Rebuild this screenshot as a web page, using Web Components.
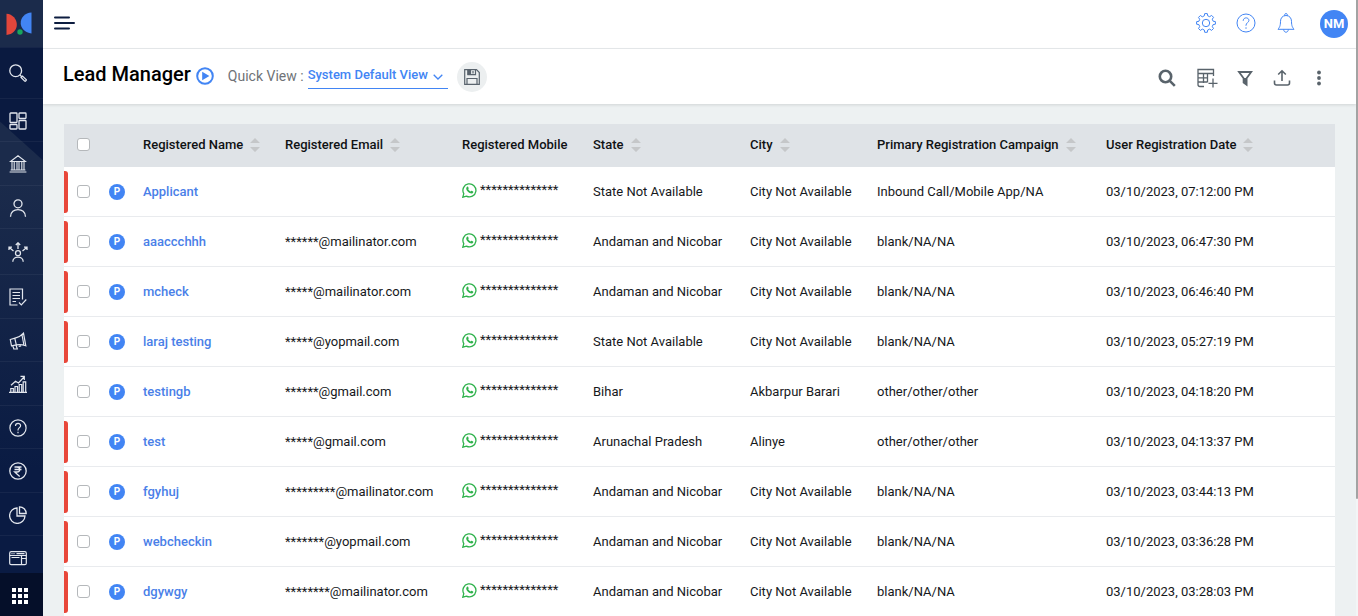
<!DOCTYPE html>
<html lang="en">
<head>
<meta charset="utf-8">
<meta name="viewport" content="width=device-width, initial-scale=1">
<title>Lead Manager</title>
<style>
  body {
    margin: 0; background: #edf1f2; color: #16181b;
    font: 400 13px/20px Roboto, "Liberation Sans", sans-serif;
  }
</style>
</head>
<body>
<app-shell>
  <side-bar slot="side"></side-bar>
  <top-bar slot="top" initials="NM"></top-bar>
  <page-header slot="header" heading="Lead Manager">
    <view-picker></view-picker>
    <page-tools slot="tools"></page-tools>
  </page-header>
  <lead-table></lead-table>
</app-shell>

<script>
(() => {
  // name: [viewBox width, viewBox height, stroke width, markup]
  const ICONS = {
    logo: [26, 24, 0, `<path fill="#e2463b" d="M.5 1.700C6.500 2 11 7 10.800 13 10.600 18.300 6.500 22.400.5 23z"/><path fill="#4285f4" d="M25.500.5v20.900C19 20.500 15 16.500 14.700 11.500 14.500 5.600 19 .8 25.500.5z"/><circle cx="14" cy="20" r="2.700" fill="#18a55c"/>`],
    menu: [22, 14, 2, `<path d="M2 1.500h14M2 7h19M2 12.500h14" stroke-linecap="round"/>`],
    search: [18, 18, 1.3, `<circle cx="6.700" cy="6.700" r="5.900"/><path d="m11 11 1.500 1.500M12.100 13.500l1.400-1.400 3.700 3.500c.5.6-.9 2-1.500 1.500z"/>`],
    dashboard: [18, 18, 1.3, `<rect x="1" y="1" width="7" height="9.500" rx=".7"/><rect x="1" y="12.500" width="7" height="4.500" rx=".7"/><rect x="10" y="1" width="7" height="5.500" rx=".7"/><rect x="10" y="8.500" width="7" height="8.500" rx=".7"/>`],
    bank: [18, 18, 1.1, `<path d="M1.500 6.500 9 .8l7.500 5.700zM.6 17h16.800M1.600 15h14.800M3 6.500V15M5.200 6.500V15M8 6.500V15M10 6.500V15M12.800 6.500V15M15 6.500V15"/>`],
    user: [18, 18, 1.3, `<circle cx="9" cy="4.800" r="4"/><path d="M1.500 17.800c0-9.700 15-9.700 15 0"/>`],
    team: [20, 20, 1.3, `<circle cx="10" cy="11.200" r="2.500"/><path d="M4.800 19.800c0-6.200 10.400-6.200 10.400 0M10 7V1M7.800 3 10 .8 12.200 3M5.500 9 1 5.300M1 8V5.200h3M14.500 9 19 5.300M19 8V5.200h-3"/>`],
    form: [18, 18, 1.2, `<path d="M8.500 17H1V1h12.500v10.500M3.500 4.500H11M3.500 7.500H11M3.500 10.500H11M3.500 13.500H7M10 14.500l2.300 2.300 5-5.300"/>`],
    megaphone: [18, 18, 1.2, `<path d="M1.300 7.500 6 6.200C9.500 5.300 12.300 3.800 14.500 1.200l2.300 12.600c-3.200-1.300-6-1.600-9.300-1l-5 1zM5.800 6.300l1.500 6.600M3.800 13.500l1 3.500h3.500l-1.300-4M13 3l1.900 10M9.700 14.500l1.800-.5-.6-1.300"/>`],
    growth: [18, 18, 1.2, `<path d="M0 17.300h18M1.800 17v-3.500h2.500V17M6 17v-5.500h2.500V17M10.200 17V9.500h2.500V17M14.200 17V6.800h2.500V17M2 10.200l4.500-4 3 1.800 5.500-6M11.500 1.400H15.300V5"/>`],
    help: [20, 20, 1.3, `<circle cx="10" cy="10" r="9"/><path d="M7.200 7.800c.1-3.900 5.700-3.800 5.700-.3 0 2-2.900 2.300-2.900 4.800v.5M10 14.300v1.500"/>`],
    rupee: [18, 18, 1.3, `<circle cx="9" cy="9" r="8.200"/><path d="M5.500 5h7M5.500 7.500h7M5.500 5H8c3.600 0 3.600 5 0 5H5.700l5 4.500"/>`],
    pie: [18, 18, 1.3, `<path d="M8 2a7.700 7.700 0 1 0 8 8H8zM10.500.8v6.700h6.700A6.800 6.800 0 0 0 10.500.8z"/>`],
    browser: [18, 18, 1.2, `<rect x=".7" y="2.700" width="16.600" height="13" rx="1.500"/><path d="M.7 6.500h16.600M2.500 4.600h1M4.500 4.600h1M7.500 4.600h8M12.500 6.500v9M12.500 9.500h4.800M2.500 8.500h8"/>`],
    apps: [18, 18, 0, `<path fill="currentColor" d="M1 1h4v4H1zM7 1h4v4H7zM13 1h4v4h-4zM1 7h4v4H1zM7 7h4v4H7zM13 7h4v4h-4zM1 13h4v4H1zM7 13h4v4H7zM13 13h4v4h-4z"/>`],
    gear: [20, 20, 1, `<circle cx="10" cy="10" r="3.700"/><path d="M8.300 2.800 8.700.6h2.600l.4 2.200 2 .9 1.900-1.300 1.900 1.900-1.200 1.900.8 2 2.300.4v2.600l-2.300.4-.8 2 1.200 1.900-1.900 1.900-1.900-1.300-2 .9-.4 2.300H8.700l-.4-2.300-2-.9-1.900 1.300-1.900-1.900 1.200-1.900-.8-2-2.300-.4V8.700l2.300-.4.8-2-1.200-1.900 1.900-1.900 1.900 1.300z" stroke-linejoin="round"/>`],
    bell: [20, 20, 1, `<path d="M10 2.500c-3.600 0-5.500 2.800-5.500 5.800 0 5-1.200 6.200-2.500 8h16c-1.300-1.800-2.500-3-2.500-8 0-3-1.900-5.800-5.500-5.800zM8.700 2.700V1.500c0-1.200 2.600-1.200 2.600 0v1.200M7.700 16.500c0 3.600 4.600 3.600 4.600 0"/>`],
    play: [18, 18, 2, `<circle cx="9" cy="9" r="7.800"/><path fill="currentColor" stroke="none" d="M6.200 4.700 13.400 9l-7.200 4.300z"/>`],
    chevron: [10, 6, 1.3, `<path d="m.7.7 4.300 4.300L9.300.7"/>`],
    save: [16, 16, 1.2, `<path d="M.7.7h11.800l2.800 2.800v11.800H.7zM4 .7v5h7.500v-5M9 2v2.500M3 15.300V9.500h10v5.800"/><path fill="currentColor" d="M4 1h2.500v4.500H4z"/>`],
    find: [20, 20, 2.6, `<circle cx="8.500" cy="8.500" r="5.700"/><path d="m12.800 12.800 5 5"/>`],
    columns: [24, 20, 1.3, `<path d="M10 18.500H6a2 2 0 0 1-2-2V1.500h15.500V8M4 5.500h15.500M4 9.800h9M4 14h9M9.500 5.500v9.500M13.500 5.500v9M19 10.500v9M14.500 15.300h9"/>`],
    filter: [20, 20, 1.8, `<path d="M4 4h12.200l-4.600 6.200v6.600l-3-2.200v-4.400z"/><path fill="currentColor" d="M9 10h2.500v6L9 14.500z" stroke="none"/>`],
    upload: [20, 20, 1.6, `<path d="M2.500 12.500v2.500q0 2 2 2h11q2 0 2-2v-2.500M10 13V3M6.200 6.500 10 2.800l3.800 3.700"/>`],
    more: [20, 20, 0, `<g fill="currentColor"><circle cx="10" cy="4.500" r="1.900"/><circle cx="10" cy="10" r="1.900"/><circle cx="10" cy="15.500" r="1.900"/></g>`],
    whatsapp: [15, 15, 1.3, `<path d="m.8 14.200 1-3.600A6.500 6.500 0 1 1 4.400 13.100z"/><path fill="currentColor" stroke="none" d="M5.100 3.700c.7-.4 1-.1 1.200.5l.4 1c.1.400-.5.800-.5 1.100.5 1 1.300 1.700 2.400 2.200.4.100.8-.8 1.100-.7l1.400.7c.6.300-.1 1.700-.9 1.900-2.400.6-6-2.500-6-4.900 0-.8.4-1.500.9-1.800z"/>`],
    sort: [10, 14, 0, `<path fill="currentColor" d="M5 0l5 5H0zM0 9h10l-5 5z"/>`]
  };

  class AppIcon extends HTMLElement {
    connectedCallback() {
      if (this.shadowRoot) return;
      const [w, h, stroke, markup] = ICONS[this.getAttribute("name")];
      const width = this.getAttribute("size") || w;
      this.attachShadow({ mode: "open" }).innerHTML = `
        <style>:host { display:inline-flex; flex:none; } svg { display:block; }</style>
        <svg width="${width}" height="${Math.round(width * h / w)}" viewBox="0 0 ${w} ${h}" fill="none"
          stroke="${stroke ? "currentColor" : "none"}" stroke-width="${this.getAttribute("weight") || stroke}" aria-hidden="true">${markup}</svg>`;
    }
  }

  // Base for elements whose shadow root is drawn once from a string.
  class View extends HTMLElement {
    connectedCallback() {
      if (this.shadowRoot) return;
      this.attachShadow({ mode: "open" }).innerHTML = `
        <style>
          * { box-sizing:border-box; }
          button, select, input { font:inherit; color:inherit; margin:0; }
          button { display:flex; align-items:center; justify-content:center; padding:0; border:0; background:none; cursor:pointer; }
        </style>${this.view()}`;
    }
  }

  class AppShell extends View {
    view() {
      return `
        <style>
          :host { display:grid; grid-template-columns:auto 1fr auto; height:100vh; overflow:hidden; }
          .main { min-width:0; min-height:0; overflow:hidden; }
          .content { padding:20px 21px; }
          .rail { width:2px; background:#f3f5f6; }
          .thumb { height:81%; background:#a3a3a3; border-radius:0 0 2px 2px; }
        </style>
        <slot name="side"></slot>
        <div class="main">
          <slot name="top"></slot>
          <slot name="header"></slot>
          <main class="content"><slot></slot></main>
        </div>
        <div class="rail"><div class="thumb"></div></div>`;
    }
  }

  class SideBar extends View {
    view() {
      const items = [
        ["dashboard", "Dashboard", 21], ["bank", "Institute", 22], ["user", "Leads", 21], ["team", "Team", 24],
        ["form", "Applications", 22], ["megaphone", "Campaigns", 21], ["growth", "Analytics", 22],
        ["help", "Queries", 21], ["rupee", "Payments", 22], ["pie", "Reports", 21], ["browser", "Pages", 22]
      ];
      return `
        <style>
          :host {
            display:flex; flex-direction:column; width:43px; height:100vh; overflow:hidden; color:#e3e7ee;
            background:linear-gradient(222deg,#0a1a40 0,#0a1a40 83px,transparent 84px) 0 48px no-repeat,
              linear-gradient(#1b2b4b 0,#1b2b4b 180px,#0a1b43 470px);
          }
          a { display:flex; justify-content:center; align-items:center; color:inherit; }
          .logo { height:47px; padding-right:6px; flex:none; }
          nav { flex:1; min-height:0; overflow:hidden; }
          .search, nav a { width:100%; padding-right:7px; border-bottom:1px solid #ffffff0d; }
          .search { height:52px; flex:none; background:#0a1a40; border-top:1px solid #ffffff0d; }
          nav a { box-sizing:content-box; width:36px; padding-top:11px; padding-bottom:10px; }
          .apps { height:43px; flex:none; width:100%; color:#fff; background:#050f29; padding:3px 3px 0 0; }
        </style>
        <a class="logo" href="#" aria-label="Home"><app-icon name="logo"></app-icon></a>
        <button class="search" aria-label="Search"><app-icon name="search"></app-icon></button>
        <nav>${items.map(([icon, label, height]) =>
          `<a href="#" aria-label="${label}" style="height:${height}px"><app-icon name="${icon}" size="${icon === "team" ? 20 : 18}"></app-icon></a>`).join("")}</nav>
        <button class="apps" aria-label="All apps"><app-icon name="apps"></app-icon></button>`;
    }
  }

  class TopBar extends View {
    view() {
      return `
        <style>
          :host { display:flex; align-items:center; height:48px; padding:0 8px 0 10px; background:#fff; border-bottom:1px solid #e8ebed; box-sizing:content-box; }
          .menu { color:#0d1d40; margin-right:auto; }
          .menu, .actions { padding-bottom:2px; }
          .actions { display:flex; gap:20px; margin-right:24px; color:#4285f4; }
          .avatar { width:28px; height:28px; border-radius:50%; background:#4285f4; color:#fff; font-weight:700; }
        </style>
        <button class="menu" aria-label="Menu"><app-icon name="menu"></app-icon></button>
        <div class="actions">
          <button aria-label="Settings"><app-icon name="gear"></app-icon></button>
          <button aria-label="Help"><app-icon name="help" weight="1"></app-icon></button>
          <button aria-label="Notifications"><app-icon name="bell"></app-icon></button>
        </div>
        <button class="avatar">${this.getAttribute("initials")}</button>`;
    }
  }

  class PageHeader extends View {
    view() {
      return `
        <style>
          :host { display:flex; align-items:center; height:55px; padding:0 27px 0 20px; background:#fff; box-shadow:0 1px 3px #0000001f; }
          h1 { margin:0 5px 6px 0; font-size:20px; line-height:24px; font-weight:500; color:#000; }
          .play { color:#4285f4; margin:0 14px 2px 0; }
          .tools { margin-left:auto; }
        </style>
        <h1>${this.getAttribute("heading")}</h1>
        <button class="play" aria-label="Watch guide"><app-icon name="play"></app-icon></button>
        <slot></slot>
        <div class="tools"><slot name="tools"></slot></div>`;
    }
  }

  class ViewPicker extends View {
    view() {
      return `
        <style>
          :host { display:flex; align-items:center; }
          label { margin:0 4px 2px 0; font-size:14px; color:#6f7377; }
          .field { display:grid; grid-template-columns:1fr 10px; width:140px; height:24px; border-bottom:1px solid #4285f4; color:#4285f4; }
          select {
            grid-area:1/1/2/3; width:100%; height:20px; padding:0; border:0; outline:0;
            appearance:none; background:none; font-weight:500;
          }
          app-icon { pointer-events:none; }
          .field app-icon { grid-area:1/2; margin:9px 5px 0 0; justify-self:end; }
          .save { width:30px; height:30px; margin-left:9px; border-radius:50%; background:#eceff0; color:#59636d; }
        </style>
        <label for="view">Quick View :</label>
        <div class="field">
          <select id="view"><option>System Default View</option></select>
          <app-icon name="chevron"></app-icon>
        </div>
        <button class="save" aria-label="Save view"><app-icon name="save"></app-icon></button>`;
    }
  }

  class PageTools extends View {
    view() {
      const tools = { find: "Search", columns: "Add column", filter: "Filter", upload: "Export", more: "More" };
      return `
        <style>:host { display:flex; gap:17px; padding-top:2px; color:#59636b; }</style>
        ${Object.entries(tools).map(([icon, label]) =>
          `<button aria-label="${label}"><app-icon name="${icon}"></app-icon></button>`).join("")}`;
    }
  }

  const NO_CITY = "City Not Available";
  const COLUMNS = [
    ["Registered Name", 142, true], ["Registered Email", 177, true], ["Registered Mobile", 131, false],
    ["State", 157, true], ["City", 127, true], ["Primary Registration Campaign", 229, true], ["User Registration Date", 229, true]
  ];
  const LEADS = [
    ["Applicant", "", "State Not Available", NO_CITY, "Inbound Call/Mobile App/NA", "07:12:00", true],
    ["aaaccchhh", "******@mailinator.com", "Andaman and Nicobar", NO_CITY, "blank/NA/NA", "06:47:30", true],
    ["mcheck", "*****@mailinator.com", "Andaman and Nicobar", NO_CITY, "blank/NA/NA", "06:46:40", true],
    ["laraj testing", "*****@yopmail.com", "State Not Available", NO_CITY, "blank/NA/NA", "05:27:19", true],
    ["testingb", "******@gmail.com", "Bihar", "Akbarpur Barari", "other/other/other", "04:18:20", false],
    ["test", "*****@gmail.com", "Arunachal Pradesh", "Alinye", "other/other/other", "04:13:37", true],
    ["fgyhuj", "*********@mailinator.com", "Andaman and Nicobar", NO_CITY, "blank/NA/NA", "03:44:13", true],
    ["webcheckin", "*******@yopmail.com", "Andaman and Nicobar", NO_CITY, "blank/NA/NA", "03:36:28", true],
    ["dgywgy", "********@mailinator.com", "Andaman and Nicobar", NO_CITY, "blank/NA/NA", "03:28:03", true]
  ];

  class LeadTable extends View {
    view() {
      return `
        <style>
          :host { display:block; background:#fff; }
          table { width:100%; table-layout:fixed; border-collapse:separate; border-spacing:0; }
          th, td { padding:0; text-align:left; white-space:nowrap; }
          th { height:43px; padding-bottom:2px; background:#dfe3e7; font-weight:500; color:#101214; }
          td { height:50px; border-bottom:1px solid #e9ebee; }
          .head, .mobile { display:flex; align-items:center; }
          .head { gap:7px; }
          .head button { color:#c5c7c9; }
          .mobile { gap:3px; margin-bottom:3px; }
          .mobile app-icon { color:#2fb24c; }
          .pick { display:flex; align-items:center; padding-left:13px; }
          td .pick { height:42px; }
          .hot .pick { gap:9px; padding-left:0; }
          .hot .pick::before { content:""; width:4px; height:42px; background:#e8473a; border-radius:0 3px 3px 0; }
          input { appearance:none; width:13px; height:13px; border:1px solid #b5b8bb; border-radius:3px; background:#fff; }
          input:checked { background:#4285f4; border-color:#4285f4; }
          .badge {
            display:flex; align-items:center; justify-content:center; width:16px; height:16px;
            border-radius:50%; background:#4285f4; color:#fff; font-size:10px; line-height:16px; font-weight:700;
          }
          td a { color:#4a7fe8; font-weight:500; text-decoration:none; }
        </style>
        <table>
          <colgroup><col style="width:45px"><col style="width:34px">${COLUMNS.map(([, width]) => `<col style="width:${width}px">`).join("")}</colgroup>
          <thead><tr>
            <th><div class="pick"><input type="checkbox" aria-label="Select all"></div></th><th></th>
            ${COLUMNS.map(([label, , sortable]) => `<th><div class="head">${label}${sortable
              ? `<button aria-label="Sort by ${label}"><app-icon name="sort"></app-icon></button>` : ""}</div></th>`).join("")}
          </tr></thead>
          <tbody>${LEADS.map((lead) => this.row(lead)).join("")}</tbody>
        </table>`;
    }

    row([name, email, state, city, campaign, time, hot]) {
      return `
        <tr class="${hot ? "hot" : ""}">
          <td><div class="pick"><input type="checkbox" aria-label="Select ${name}"></div></td>
          <td><span class="badge">P</span></td>
          <td><a href="#">${name}</a></td>
          <td>${email}</td>
          <td><div class="mobile"><app-icon name="whatsapp"></app-icon>**************</div></td>
          <td>${state}</td><td>${city}</td><td>${campaign}</td>
          <td>03/10/2023, ${time} PM</td>
        </tr>`;
    }
  }

  customElements.define("app-icon", AppIcon);
  customElements.define("app-shell", AppShell);
  customElements.define("side-bar", SideBar);
  customElements.define("top-bar", TopBar);
  customElements.define("page-header", PageHeader);
  customElements.define("view-picker", ViewPicker);
  customElements.define("page-tools", PageTools);
  customElements.define("lead-table", LeadTable);
})();
</script>
</body>
</html>
